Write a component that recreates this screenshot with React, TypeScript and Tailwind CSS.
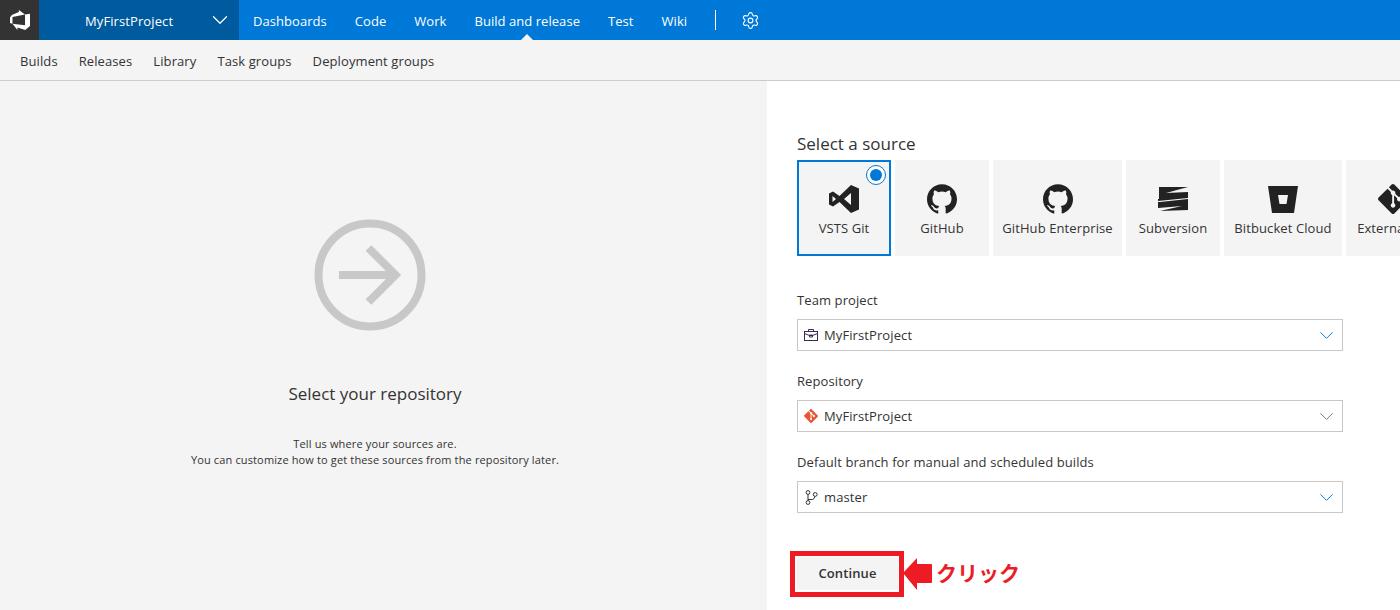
import { ChevronDown, Settings } from "lucide-react";
import { SiGit, SiGithub } from "react-icons/si";

const nav = ["Dashboards", "Code", "Work", "Build and release", "Test", "Wiki"];
const sub = ["Builds", "Releases", "Library", "Task groups", "Deployment groups"];

function VsIcon() {
  return (
    <svg width="30" height="28" viewBox="0 0 30 28" fill="#222">
      <path fillRule="evenodd" d="M22 0L30 3.5V24.5L22 28L10.5 17L4 21.5L0 19.5V8.5L4 6.5L10.5 11ZM22 8L15 14L22 20ZM3.5 11V17L7 14Z" />
    </svg>
  );
}
function SvnIcon() {
  return (
    <svg width="30" height="24" viewBox="0 0 30 24" fill="#222">
      <path d="M1 0H30L8 6L30 5V11L0 14V12H1Z" />
      <path d="M0 15H2L30 12V23L2 24L24 19L0 21Z" />
    </svg>
  );
}
function BitbucketIcon() {
  return (
    <svg width="30" height="27" viewBox="0 0 30 27" fill="#222">
      <path fillRule="evenodd" d="M0 0H30L26 27H4ZM10 9L11.5 18H18.5L20 9Z" />
    </svg>
  );
}
function Logo() {
  return (
    <svg width="20" height="20" viewBox="0 0 24 24" fill="#fff">
      <path d="M0 8.877L2.247 5.91l8.405-3.416V.022l7.37 5.393L2.966 8.338v8.225L0 15.707zm24-4.45v14.651l-5.753 4.9-9.303-3.057v3.056l-5.978-7.416 15.057 1.798V5.415z" />
    </svg>
  );
}
function ProjectIcon() {
  return (
    <svg width="14" height="12" viewBox="0 0 14 12" fill="none" stroke="#3b2a4d" strokeWidth="1">
      <rect x="0.5" y="2.5" width="13" height="9" />
      <path d="M4.5 2.5V0.5H9.5V2.5M0.5 4.5L5.5 6.5H8.5L13.5 4.5M5.5 6H8.5V8H5.5Z" />
    </svg>
  );
}
function BranchIcon() {
  return (
    <svg width="13" height="15" viewBox="0 0 13 15" fill="none" stroke="#333" strokeWidth="1">
      <circle cx="3" cy="2.5" r="1.9" />
      <circle cx="10.2" cy="4.5" r="1.9" />
      <circle cx="3" cy="12.5" r="1.9" />
      <path d="M3 4.4V10.6M3 9.5H7.5Q9.6 9 9.8 6.4" />
    </svg>
  );
}

function Card({ w, label, icon, selected }: { w: string; label: string; icon: React.ReactNode; selected?: boolean }) {
  return (
    <div className={`relative h-[96px] shrink-0 bg-[#f4f4f4] flex flex-col items-center ${w} ${selected ? "border-2 border-[#0078d7] pt-[21px]" : "pt-[23px]"}`}>
      {selected && (
        <span className="absolute right-[3px] top-[3px] w-[20px] h-[20px] rounded-full bg-white border border-[#0078d7] flex items-center justify-center">
          <span className="w-[12px] h-[12px] rounded-full bg-[#0078d7]" />
        </span>
      )}
      <div className="h-[32px] flex items-center justify-center">{icon}</div>
      <div className="mt-[3px] text-[13px] leading-[20px] text-[#333] whitespace-nowrap tracking-[0.1px]">{label}</div>
    </div>
  );
}

function Field({ label, icon, value, top, chevron }: { label: string; icon: React.ReactNode; value: string; top: string; chevron: string }) {
  return (
    <div className={top}>
      <div className="text-[13px] leading-[20px] text-[#333] tracking-[0.1px]">{label}</div>
      <div className="mt-[9px] w-[546px] h-[32px] border border-[#c8c8c8] bg-white flex items-center pl-[6px] pr-[4px]">
        <span className="w-[14px] h-[16px] flex items-center justify-center">{icon}</span>
        <span className="ml-[6px] pt-[2px] text-[13px] text-[#333] tracking-[0.1px]">{value}</span>
        <ChevronDown className={`ml-auto ${chevron}`} size={23} strokeWidth={1} />
      </div>
    </div>
  );
}

export default function App() {
  return (
    <div className="relative w-[1400px] h-[610px] overflow-hidden bg-white font-['Open_Sans','Noto_Sans_CJK_JP',sans-serif] flex flex-col">
      <header className="h-[40px] shrink-0 bg-[#0078d7] flex items-center text-white text-[13px]">
        <div className="w-[39px] h-full bg-[#333] flex items-center justify-center"><Logo /></div>
        <div className="w-[200px] h-full bg-[#005a9e] flex items-center pl-[46px] pr-[6px] justify-between">
          <span className="pt-[4px] tracking-[0.1px]">MyFirstProject</span>
          <ChevronDown size={26} strokeWidth={1.2} className="text-white" />
        </div>
        <nav className="flex items-center h-full ml-[14px] gap-[28px] tracking-[0.05px]">
          {nav.map((n) => (
            <span key={n} className="relative h-full flex items-center pt-[4px] whitespace-nowrap">
              {n}
              {n === "Build and release" && (
                <span className="absolute bottom-0 left-1/2 -ml-[6px] w-0 h-0 border-x-[6px] border-x-transparent border-b-[6px] border-b-[#f4f4f4]" />
              )}
            </span>
          ))}
        </nav>
        <span className="ml-[28px] w-px h-[20px] bg-white" />
        <Settings className="ml-[25px]" size={19} strokeWidth={1.4} />
      </header>
      <div className="h-[41px] shrink-0 bg-[#f4f4f4] border-b border-[#ccc] flex items-center pl-[20px] pt-[4px] gap-[21px] text-[13px] text-[#333] tracking-[0.1px]">
        {sub.map((s) => <span key={s}>{s}</span>)}
      </div>
      <main className="flex-1 flex min-h-0">
        <section className="w-[767px] bg-[#f4f4f4] pr-[17px] pt-[138px] flex flex-col items-center">
          <svg className="mr-[10px]" width="112" height="112" viewBox="0 0 112 112" fill="none" stroke="#c8c8c8" strokeWidth="8">
            <circle cx="56" cy="56" r="51.5" />
            <path d="M25 56H80M54.5 29L81.5 56L54.5 83" />
          </svg>
          <h1 className="mt-[51px] text-[17px] leading-[24px] text-[#333]">Select your repository</h1>
          <p className="mt-[30px] text-[11px] leading-[16px] text-[#333] text-center tracking-[0.14px]">
            Tell us where your sources are.<br />You can customize how to get these sources from the repository later.
          </p>
        </section>
        <section className="flex-1 min-w-0 overflow-hidden pl-[30px] pt-[50px]">
          <h2 className="text-[17px] leading-[26px] text-[#333]">Select a source</h2>
          <div className="flex gap-[4px] mt-[3px]">
            <Card w="w-[94px]" label="VSTS Git" selected icon={<VsIcon />} />
            <Card w="w-[94px]" label="GitHub" icon={<SiGithub size={30} color="#222" />} />
            <Card w="w-[129px]" label="GitHub Enterprise" icon={<SiGithub size={30} color="#222" />} />
            <Card w="w-[94px]" label="Subversion" icon={<SvnIcon />} />
            <Card w="w-[118px]" label="Bitbucket Cloud" icon={<BitbucketIcon />} />
            <Card w="w-[94px]" label="External Git" icon={<SiGit size={30} color="#222" />} />
          </div>
          <Field top="mt-[34px]" label="Team project" value="MyFirstProject" chevron="text-[#0078d7]" icon={<ProjectIcon />} />
          <Field top="mt-[20px]" label="Repository" value="MyFirstProject" chevron="text-[#85705a]" icon={<SiGit size={14} color="#f05133" />} />
          <Field top="mt-[20px]" label="Default branch for manual and scheduled builds" value="master" chevron="text-[#0078d7]" icon={<BranchIcon />} />
          <button className="block mt-[44px] w-[101px] h-[33px] bg-[#f4f4f4] pt-[1px] text-[13px] font-semibold tracking-[0.1px] text-[#333]">Continue</button>
        </section>
      </main>
      <div className="absolute left-[790px] top-[551px] w-[114px] h-[46px] border-[5px] border-[#ed1c24]" />
      <svg className="absolute left-[903px] top-[557px]" width="30" height="34" viewBox="0 0 30 34" fill="#ed1c24">
        <path d="M0 16L14 1V7H28Q29 7 29 8V25Q29 26 28 26H14V33Z" />
      </svg>
      <div className="absolute left-[936px] top-[559px] text-[21px] leading-[28px] font-bold text-[#ed1c24] whitespace-nowrap">クリック</div>
    </div>
  );
}
